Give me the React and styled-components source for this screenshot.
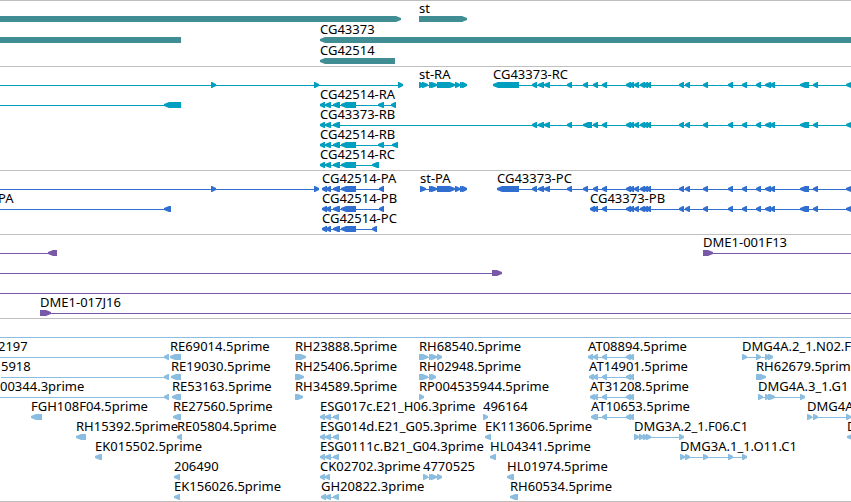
import React from "react";
import styled, { createGlobalStyle } from "styled-components";

const EDGE = 4000;

// exon groups shared by several gene models, as [start, end] on the ruler
const stExons = [[429, 434], [431, 437], [437, 455], [455, 460], [460, 465], [462, 467]];
const cg42514Exons = [[333, 340], [341, 356]];
const upstream = [[532, 537], [538, 544], [544, 550], [567, 572]];
const downstream = [
	[602, 607], [626, 631], [629, 634], [634, 639], [640, 645], [643, 648], [646, 651],
	[679, 684], [685, 690], [703, 708], [728, 733], [742, 747], [756, 761], [765, 771],
	[770, 775], [800, 809], [813, 818], [846, 852],
];
const atExons = [[593, 598], [602, 607], [626, 631], [629, 634]];
const esgExons = [[320, 325], [325, 331], [333, 339]];

const tracks = [
	{
		name: "Genes",
		color: "#408e94",
		laneHeight: 15,
		rows: [
			[
				{ from: -20, dir: "right", exons: [[-20, 401]] },
				{ label: "st", from: 419, dir: "right", exons: [[419, 467]] },
			],
			[
				{ from: -20, dir: "left", exons: [[-20, 181]] },
				{ label: "CG43373", from: 320, dir: "left", exons: [[320, EDGE]] },
			],
			[{ label: "CG42514", from: 320, dir: "left", exons: [[320, 395]] }],
		],
	},
	{
		name: "Transcripts",
		color: "#009fbf",
		rows: [
			[
				{ from: -20, dir: "right", exons: [[211, 216], [314, 319], [398, 403]] },
				{ label: "st-RA", from: 419, dir: "right", exons: [[419, 424], [422, 428], ...stExons] },
				{
					label: "CG43373-RC",
					from: 493,
					to: EDGE,
					dir: "left",
					exons: [[493, 519], ...upstream, [583, 588], [593, 598], ...downstream],
				},
			],
			[
				{ from: -20, dir: "left", exons: [[164, 181]] },
				{
					label: "CG42514-RA",
					from: 320,
					dir: "left",
					exons: [[320, 325], [325, 331], ...cg42514Exons, [378, 384], [391, 396]],
				},
			],
			[
				{
					label: "CG43373-RB",
					from: 320,
					to: EDGE,
					dir: "left",
					exons: [
						[320, 325], [325, 331], [333, 340],
						...upstream, [583, 592], [593, 598], ...downstream,
					],
				},
			],
			[
				{
					label: "CG42514-RB",
					from: 320,
					dir: "left",
					exons: [[320, 325], [325, 331], ...cg42514Exons, [378, 384], [392, 398]],
				},
			],
			[
				{
					label: "CG42514-RC",
					from: 320,
					dir: "left",
					exons: [[320, 325], [325, 331], ...cg42514Exons, [372, 379]],
				},
			],
		],
	},
	{
		name: "Proteins",
		color: "#306ed0",
		rows: [
			[
				{ from: -20, dir: "right", exons: [[211, 216], [314, 319]] },
				{
					label: "CG42514-PA",
					from: 322,
					dir: "left",
					exons: [[322, 327], [326, 331], ...cg42514Exons, [379, 384]],
				},
				{ label: "st-PA", from: 420, dir: "right", exons: [[420, 426], ...stExons] },
				{
					label: "CG43373-PC",
					from: 497,
					to: EDGE,
					dir: "left",
					exons: [[497, 519], ...upstream, [583, 588], [593, 598], ...downstream],
				},
			],
			[
				{ label: "PA", from: -2, dir: "left", exons: [[164, 171]] },
				{
					label: "CG42514-PB",
					from: 322,
					dir: "left",
					exons: [[322, 327], [326, 331], ...cg42514Exons, [379, 384]],
				},
				{
					label: "CG43373-PB",
					from: 590,
					to: EDGE,
					dir: "left",
					exons: [[590, 595], [593, 598], ...downstream],
				},
			],
			[
				{
					label: "CG42514-PC",
					from: 322,
					dir: "left",
					exons: [[322, 327], [326, 331], ...cg42514Exons, [372, 377]],
				},
			],
		],
	},
	{
		name: "Tiling BACs",
		color: "#7859a8",
		rows: [
			[
				{ from: -20, dir: "left", exons: [[48, 57]] },
				{ label: "DME1-001F13", from: 703, to: EDGE, dir: "right", exons: [[703, 713]] },
			],
			[{ from: -20, dir: "right", exons: [[492, 502]] }],
			[{ from: -20, to: EDGE, dir: "right", exons: [] }],
			[{ label: "DME1-017J16", from: 40, to: EDGE, dir: "right", exons: [[40, 51]] }],
		],
	},
	{
		name: "ESTs",
		color: "#8abddf",
		rows: [
			[{ from: -20, to: EDGE, dir: "left", exons: [] }],
			[
				{ label: "2197", from: -2, dir: "left", exons: [[164, 169]] },
				{ label: "RE69014.5prime", from: 170, dir: "left", exons: [[170, 181]] },
				{ label: "RH23888.5prime", from: 295, dir: "right", exons: [[295, 306]] },
				{
					label: "RH68540.5prime",
					from: 419,
					dir: "right",
					exons: [[419, 428], [429, 434], [431, 437], [437, 442]],
				},
				{ label: "AT08894.5prime", from: 588, dir: "left", exons: [[588, 593], ...atExons] },
				{
					label: "DMG4A.2_1.N02.F",
					from: 742,
					dir: "right",
					exons: [[742, 747], [756, 761], [765, 770], [768, 773]],
				},
			],
			[
				{ label: "5918", from: 1, dir: "left", exons: [[164, 169]] },
				{ label: "RE19030.5prime", from: 171, dir: "left", exons: [[171, 181]] },
				{ label: "RH25406.5prime", from: 295, dir: "right", exons: [[295, 304]] },
				{
					label: "RH02948.5prime",
					from: 419,
					dir: "right",
					exons: [[419, 428], [429, 434], [431, 436]],
				},
				{ label: "AT14901.5prime", from: 589, dir: "left", exons: [[589, 594], ...atExons] },
				{ label: "RH62679.5prim", from: 756, dir: "right", exons: [[756, 766]] },
			],
			[
				{ label: "00344.3prime", from: 0, dir: "left", exons: [[164, 169]] },
				{ label: "RE53163.5prime", from: 172, dir: "left", exons: [[172, 181]] },
				{ label: "RH34589.5prime", from: 295, dir: "right", exons: [[295, 303]] },
				{ label: "RP004535944.5prime", from: 419, dir: "right", exons: [[419, 424]] },
				{ label: "AT31208.5prime", from: 590, dir: "left", exons: [[590, 595], ...atExons] },
				{
					label: "DMG4A.3_1.G1",
					from: 758,
					dir: "right",
					exons: [[758, 763], [765, 770], [768, 775], [800, 805]],
				},
			],
			[
				{ label: "FGH108F04.5prime", from: 31, dir: "left", exons: [[31, 42]] },
				{ label: "RE27560.5prime", from: 173, dir: "left", exons: [[173, 181]] },
				{ label: "ESG017c.E21_H06.3prime", from: 320, dir: "left", exons: esgExons },
				{ label: "496164", from: 483, dir: "right", exons: [[483, 488]] },
				{ label: "AT10653.5prime", from: 591, dir: "left", exons: [[591, 596], ...atExons] },
				{
					label: "DMG4A",
					from: 807,
					dir: "right",
					exons: [[807, 812], [813, 818], [846, 851]],
				},
			],
			[
				{ label: "RH15392.5prime", from: 76, dir: "left", exons: [[76, 86]] },
				{ label: "RE05804.5prime", from: 177, dir: "left", exons: [[177, 182]] },
				{ label: "ESG014d.E21_G05.3prime", from: 320, dir: "left", exons: esgExons },
				{ label: "EK113606.5prime", from: 485, dir: "left", exons: [[485, 491]] },
				{
					label: "DMG3A.2_1.F06.C1",
					from: 634,
					dir: "right",
					exons: [[634, 639], [639, 644], [643, 648], [646, 651], [679, 684]],
				},
				{ label: "D", from: 847, dir: "left", exons: [[847, 854]] },
			],
			[
				{ label: "EK015502.5prime", from: 95, dir: "left", exons: [[95, 102]] },
				{ label: "ESG0111c.B21_G04.3prime", from: 320, dir: "left", exons: esgExons },
				{ label: "HL04341.5prime", from: 490, dir: "left", exons: [[490, 496]] },
				{
					label: "DMG3A.1_1.O11.C1",
					from: 680,
					dir: "right",
					exons: [[680, 685], [685, 690], [703, 708], [728, 733], [742, 747]],
				},
			],
			[
				{ label: "206490", from: 174, dir: "left", exons: [[174, 180]] },
				{ label: "CK02702.3prime", from: 320, dir: "left", exons: [[320, 325], [325, 330]] },
				{
					label: "4770525",
					from: 423,
					dir: "right",
					exons: [[423, 428], [429, 434], [431, 437], [437, 442]],
				},
				{ label: "HL01974.5prime", from: 507, dir: "left", exons: [[507, 514]] },
			],
			[
				{ label: "EK156026.5prime", from: 174, dir: "left", exons: [[174, 180]] },
				{
					label: "GH20822.3prime",
					from: 321,
					dir: "left",
					exons: [[321, 326], [325, 331], [333, 339]],
				},
				{ label: "RH60534.5prime", from: 510, dir: "left", exons: [[510, 518]] },
			],
		],
	},
];

// a box with a blunt arrow head on the end that the strand points to
const exonPoints = ([a, b], dir) => {
	const head = Math.min(5, b - a - 1);
	if (dir === "left") {
		return `${a},2 ${a + head},0 ${b},0 ${b},6 ${a + head},6 ${a},4`;
	}
	return `${b},2 ${b - head},0 ${a},0 ${a},6 ${b - head},6 ${b},4`;
};

const Feature = ({ feature }) => {
	const { from, dir, exons } = feature;
	const to = feature.to || exons[exons.length - 1][1];
	return (
		<g>
			<rect x={from} y="3" width={to - from} height="1" />
			{exons.map((exon, i) => (
				<polygon key={i} points={exonPoints(exon, dir)} />
			))}
		</g>
	);
};

const App = () => (
	<Browser>
		<GlobalStyle />
		{tracks.map((track) => (
			<Track key={track.name} aria-label={track.name} $roomy={track.laneHeight === 15}>
				{track.rows.map((row, i) => (
					<Row key={i}>
						<Lane $height={track.laneHeight || 14}>
							{row
								.filter((feature) => feature.label)
								.map((feature) => (
									<Label key={feature.label} style={{ left: feature.from }}>
										{feature.label}
									</Label>
								))}
						</Lane>
						<Glyphs $color={track.color} aria-hidden="true">
							{row.map((feature, j) => (
								<Feature key={j} feature={feature} />
							))}
						</Glyphs>
					</Row>
				))}
			</Track>
		))}
	</Browser>
);

// styled-components
const GlobalStyle = createGlobalStyle`
	body {
		margin: 0;
		background: #fff;
	}
`;
const Browser = styled.main`
	overflow: hidden;
	border-bottom: 1px solid #bfbfbf;

	color: #000;
	font-family: "Noto Sans", "DejaVu Sans", sans-serif;
	font-size: 13px;
	line-height: 16px;
`;
const Track = styled.section`
	padding: ${(props) => (props.$roomy ? "0 0 2px" : "1px 0 2px")};
	border-top: 1px solid #bfbfbf;

	&:last-of-type {
		padding-bottom: 1px;
	}
`;
const Row = styled.div`
	display: flex;
	flex-direction: column;
`;
const Lane = styled.div`
	position: relative;
	height: ${(props) => props.$height}px;
`;
// labels sit on the ruler, at the start of their feature
const Label = styled.span`
	position: absolute;
	bottom: 0;
	white-space: nowrap;
`;
const Glyphs = styled.svg`
	display: block;
	width: 100%;
	height: 6px;
	fill: ${(props) => props.$color};
`;

export default App;
